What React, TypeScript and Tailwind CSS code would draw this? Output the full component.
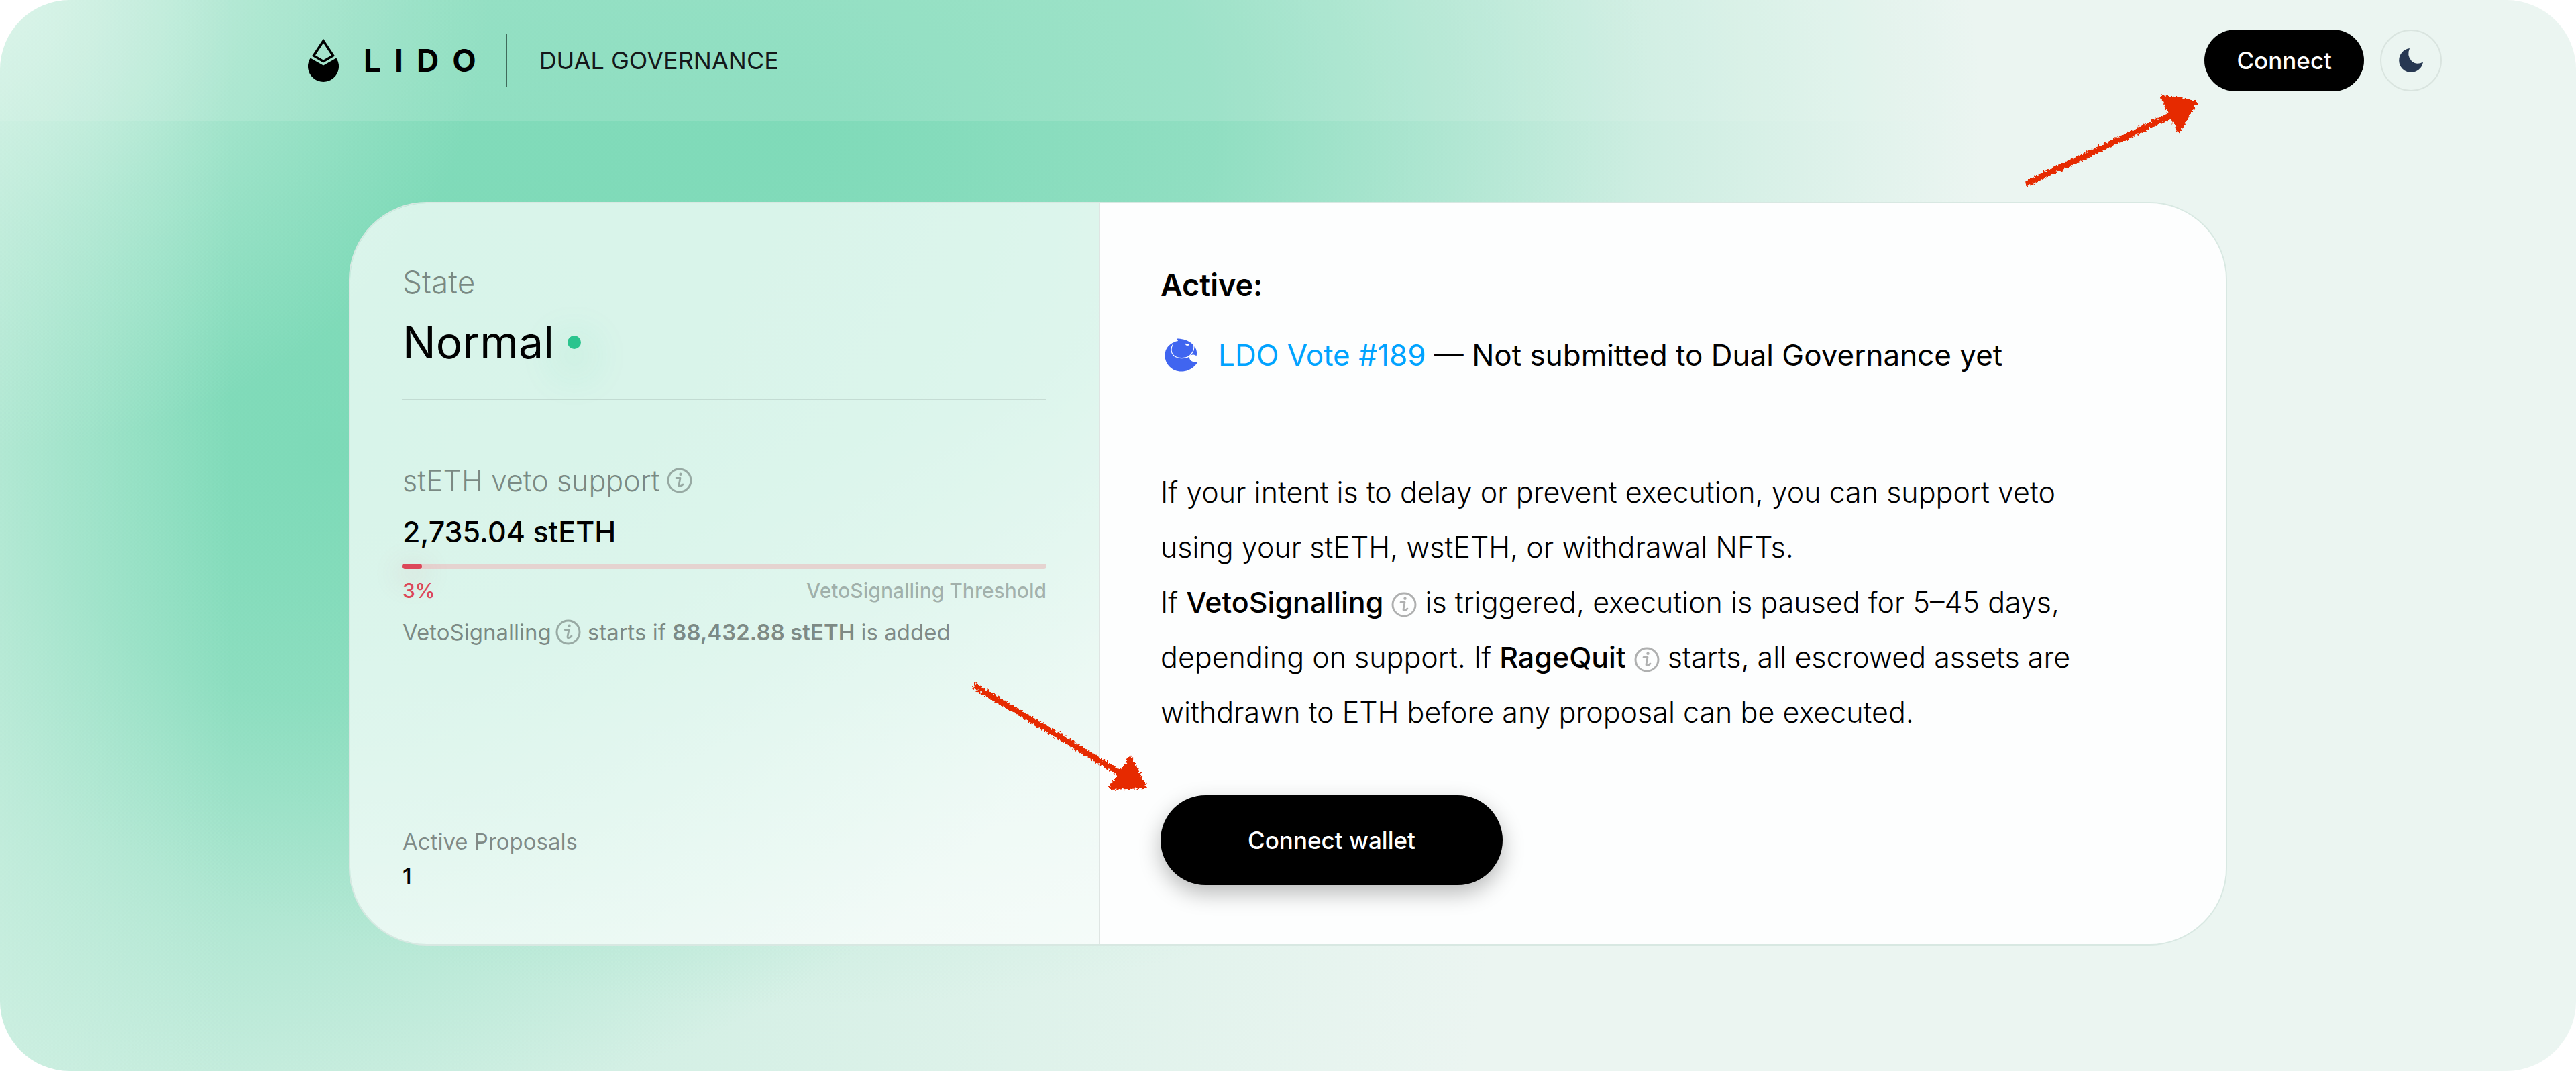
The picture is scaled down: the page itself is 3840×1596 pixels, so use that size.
import type { ReactNode } from "react";

const ARROW_RED = "#e62a00";

function RoughFilter({ id }: { id: string }) {
  return (
    <filter id={id} x="-10%" y="-10%" width="120%" height="120%">
      <feTurbulence type="fractalNoise" baseFrequency="0.3" numOctaves={3} seed={4} result="noise" />
      <feDisplacementMap in="SourceGraphic" in2="noise" scale={8} xChannelSelector="R" yChannelSelector="G" />
    </filter>
  );
}

function ArrowUp() {
  return (
    <svg
      aria-hidden="true"
      viewBox="0 0 272 160"
      className="pointer-events-none absolute top-[90px] right-[358px] h-[160px] w-[272px]"
    >
      <defs>
        <RoughFilter id="rough-up" />
      </defs>
      <g filter="url(#rough-up)" fill={ARROW_RED} stroke={ARROW_RED} strokeLinejoin="round">
        <path d="M14 138 L226 38" strokeWidth="9" strokeLinecap="square" />
        <path d="M214 10 L262 19 L238 60 Z" strokeWidth="6" />
      </g>
    </svg>
  );
}

function ArrowDown() {
  return (
    <svg
      aria-hidden="true"
      viewBox="0 0 280 180"
      className="pointer-events-none absolute -top-[172px] -left-[288px] h-[180px] w-[280px]"
    >
      <defs>
        <RoughFilter id="rough-down" />
      </defs>
      <g filter="url(#rough-down)" fill={ARROW_RED} stroke={ARROW_RED} strokeLinejoin="round">
        <path d="M14 11 L226 138" strokeWidth="9" strokeLinecap="square" />
        <path d="M243 117 L264 159 L215 161 Z" strokeWidth="6" />
      </g>
    </svg>
  );
}

function LidoDrop() {
  return (
    <svg viewBox="0 0 48 66" aria-hidden="true" className="h-[66px] w-[48px]">
      <path d="M24 4 L38.500 26 L24 34.500 L9.500 26 Z" fill="none" stroke="#000" strokeWidth="3.600" />
      <path d="M4.700 29.500 L24 40.500 L43.300 29.500 A23 23 0 1 1 4.700 29.500 Z" fill="#000" />
    </svg>
  );
}

function InfoIcon({ label }: { label: string }) {
  return (
    <button type="button" aria-label={label} className="inline-block size-[38px] cursor-pointer align-middle opacity-30">
      <svg viewBox="0 0 38 38" className="block size-full" fill="none" stroke="#000" strokeLinecap="round" strokeLinejoin="round">
        <circle cx="19" cy="19" r="17" strokeWidth="3" />
        <path d="M14 15.500 H20 L18 26 Q17.800 28 19.600 27.600 Q22 27 24 25" strokeWidth="2.800" />
        <circle cx="20.500" cy="9.800" r="2.200" fill="#000" stroke="none" />
      </svg>
    </button>
  );
}

function MoonIcon() {
  return (
    <svg viewBox="0 0 38 38" aria-hidden="true" className="size-[38px]">
      <path d="M17 1 A18 18 0 1 0 37 21.500 Q27 27 19.500 19.500 Q12.500 11.500 17 1 Z" fill="#273852" />
    </svg>
  );
}

function AragonIcon() {
  return (
    <svg viewBox="0 0 50 50" aria-hidden="true" className="size-[50px] shrink-0">
      <path
        d="M18.500 0.500 C27 0.500 40 4 44 12 C47.500 15 49 21 47.500 26.500 C44 23.500 38.500 24 37 27.500 C36.500 33 42 36.500 49.500 35.500 C44 44 35 49.500 25 49.500 C11.500 49.500 0.500 39 0.500 25.500 C0.500 15 7.500 6.500 20 4 Z"
        fill="#4065f0"
      />
      <path
        d="M12.500 9 C8.500 15 9.500 22.500 14.500 26.500 C20 30.500 31 30.500 36.500 27 C42 22 45 17 43.500 10.500"
        fill="none"
        stroke="#fff"
        strokeWidth="1.200"
      />
      <path d="M30 7.500 L36.500 9 L35.500 11 L32 10.500 Z" fill="#fff" />
    </svg>
  );
}

function Term({ children }: { children: ReactNode }) {
  return <strong className="font-medium">{children}</strong>;
}

function Header() {
  return (
    <header className="flex h-[180px] items-center justify-between bg-[#edf5ef]/15 pr-[200px] pl-[458px]">
      <div className="flex items-center">
        <a href="#home" className="flex items-center gap-[36px]">
          <LidoDrop />
          <span className="flex gap-[20px] text-[46px] leading-[60px] font-bold">
            <span>L</span>
            <span>I</span>
            <span>D</span>
            <span>O</span>
          </span>
        </a>
        <span className="mr-[48px] ml-[44px] h-[80px] w-[2px] bg-[#3f6b5b]" />
        <span className="text-[36px] leading-[60px] text-[#14181a]">DUAL GOVERNANCE</span>
      </div>
      <div className="relative flex items-center gap-[24px]">
        <button type="button" className="h-[92px] rounded-full bg-black px-[48px] text-[35px] leading-[48px] font-medium text-white">
          Connect
        </button>
        <button
          type="button"
          aria-label="Switch to dark theme"
          className="flex size-[92px] items-center justify-center rounded-full border-2 border-[#d9e4df]"
        >
          <MoonIcon />
        </button>
        <ArrowUp />
      </div>
    </header>
  );
}

function StatePanel() {
  return (
    <section className="flex w-[1118px] shrink-0 flex-col justify-between border-r-2 border-[#dfe5e3] bg-white/70 px-[78px] pt-[85px] pb-[77px]">
      <div>
        <p className="text-[46px] leading-[64px] font-light text-black/45">State</p>
        <div className="mt-[10px] flex items-center gap-[20px] border-b-2 border-black/10 pb-[36px]">
          <h1 className="text-[66px] leading-[96px] font-normal">Normal</h1>
          <span className="size-[20px] rounded-full bg-[#2bc48e] shadow-[0_20px_60px_20px_rgba(43,196,142,0.10)]" />
        </div>
        <div className="mt-[88px] flex items-center gap-[10px] text-[43px] leading-[64px] font-light">
          <span className="text-black/45">stETH veto support</span>
          <InfoIcon label="About stETH veto support" />
        </div>
        <p className="mt-[12px] text-[43px] leading-[64px] font-medium">2,735.04 stETH</p>
        <div
          role="progressbar"
          aria-label="VetoSignalling threshold"
          aria-valuenow={3}
          aria-valuemin={0}
          aria-valuemax={100}
          className="mt-[16px] h-[8px] rounded-full bg-[#e5d3d0]"
        >
          <div className="h-full w-[3%] rounded-full bg-[#dc4759] shadow-[0_10px_40px_10px_rgba(220,71,89,0.10)]" />
        </div>
        <div className="mt-[12px] flex justify-between text-[30px] leading-[40px] font-medium">
          <span className="text-[#dc4759]">3%</span>
          <span className="text-black/30">VetoSignalling Threshold</span>
        </div>
        <p className="mt-[18px] flex items-center text-[33px] leading-[48px] text-black/45">
          <span className="mr-[6px]">VetoSignalling</span>
          <InfoIcon label="About VetoSignalling" />
          <span className="ml-[10px]">
            starts if <strong className="font-semibold">88,432.88 stETH</strong> is added
          </span>
        </p>
      </div>
      <div>
        <p className="text-[33px] leading-[48px] text-black/45">Active Proposals</p>
        <p className="mt-[4px] text-[33px] leading-[48px] font-medium">1</p>
      </div>
    </section>
  );
}

function ActionPanel() {
  return (
    <section className="flex flex-1 flex-col items-start bg-[#fdfefe] pt-[90px] pr-[160px] pb-[88px] pl-[90px] text-[43px]">
      <h2 className="text-[45px] leading-[64px] font-semibold">Active:</h2>
      <div className="mt-[40px] flex items-center pl-[6px]">
        <AragonIcon />
        <p className="ml-[30px] text-[44px] leading-[64px]">
          <a href="#vote-189" className="text-[#00a3ff]">
            LDO Vote #189
          </a>{" "}
          — Not submitted to Dual Governance yet
        </p>
      </div>
      <div className="mt-[131px] max-w-[1420px] leading-[82px] font-light">
        <p>If your intent is to delay or prevent execution, you can support veto using your stETH, wstETH, or withdrawal NFTs.</p>
        <p>
          If <Term>VetoSignalling</Term> <InfoIcon label="About VetoSignalling" /> is triggered, execution is paused for 5–45 days,
          depending on support. If <Term>RageQuit</Term> <InfoIcon label="About RageQuit" /> starts, all escrowed assets are
          withdrawn to ETH before any proposal can be executed.
        </p>
      </div>
      <div className="relative mt-[83px]">
        <button
          type="button"
          className="h-[134px] w-[510px] rounded-full bg-black text-[35px] leading-[48px] font-medium text-white shadow-[0_12px_32px_rgba(0,0,0,0.28)]"
        >
          Connect wallet
        </button>
        <ArrowDown />
      </div>
    </section>
  );
}

export default function App() {
  return (
    <div className="bg-white font-['Inter',sans-serif] text-black">
      <div className="min-h-screen overflow-hidden rounded-[104px] bg-[#ebf5f1] bg-[radial-gradient(ellipse_19%_42%_at_0%_0%,rgba(226,246,237,0.75)_0%,rgba(226,246,237,0.3)_50%,rgba(226,246,237,0)_100%),linear-gradient(90deg,rgba(214,242,230,0.5)_0%,rgba(214,242,230,0)_9%),radial-gradient(ellipse_46%_82%_at_31%_12%,rgba(122,217,182,0.92)_0%,rgba(122,217,182,0.78)_35%,rgba(122,217,182,0.26)_72%,rgba(122,217,182,0)_100%),radial-gradient(ellipse_31%_62%_at_13%_42%,rgba(122,217,182,0.92)_0%,rgba(122,217,182,0.7)_38%,rgba(122,217,182,0.25)_75%,rgba(122,217,182,0)_100%),linear-gradient(100deg,#bcead8_0%,#ebf5f1_60%)]">
        <Header />
        <main className="mx-auto px-[520px] pt-[121px] pb-[187px]">
          <div className="flex rounded-[116px] border-2 border-[#d8e8e2]">
            <div className="flex flex-1 overflow-hidden rounded-[114px]">
              <StatePanel />
              <ActionPanel />
            </div>
          </div>
        </main>
      </div>
    </div>
  );
}
